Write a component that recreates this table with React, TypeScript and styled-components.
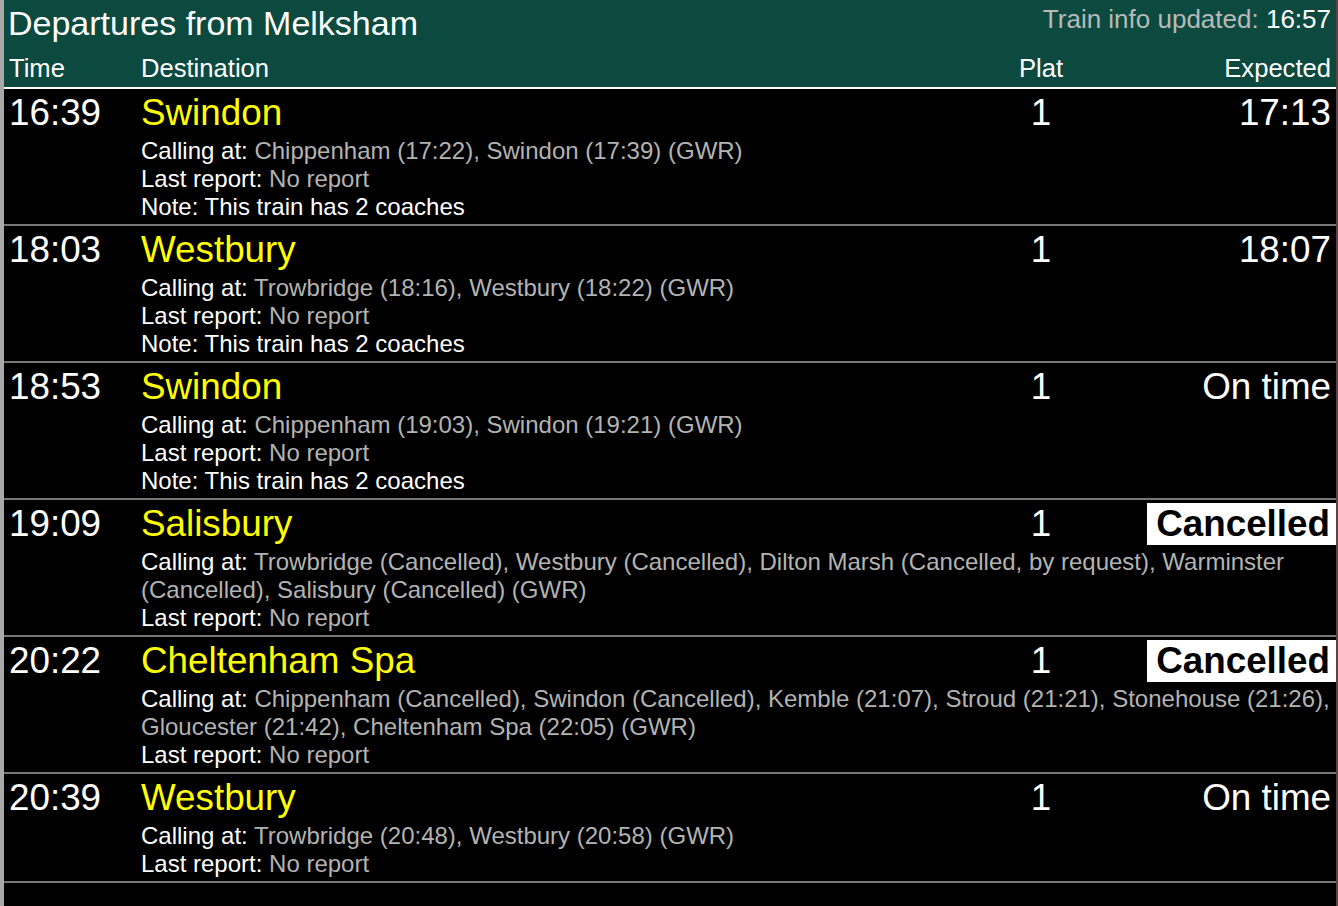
import React from 'react';
import styled, { createGlobalStyle } from 'styled-components';

const GlobalStyle = createGlobalStyle`
  html, body {
    margin: 0;
    padding: 0;
    height: 100%;
  }
  body {
    font-family: "Liberation Sans", Arial, Helvetica, sans-serif;
    background: linear-gradient(
      to right,
      #a9a9a9 0 4px,
      #000 4px 1336px,
      #5c4242 1336px
    );
    overflow: hidden;
  }
`;

const Board = styled.div`
  margin-left: 4px;
  width: 1332px;
  min-height: 906px;
  background: #000;
  color: #fff;
`;

const Header = styled.header`
  background: #0c4a3f;
  padding: 3px 5px 4px 0;
  border-bottom: 2px solid #fff;
`;

const TitleRow = styled.div`
  display: flex;
  justify-content: space-between;
  align-items: flex-start;
  padding-left: 4px;
`;

const Title = styled.h1`
  margin: 0;
  font-size: 34px;
  line-height: 40px;
  font-weight: normal;
`;

const Updated = styled.div`
  font-size: 26px;
  line-height: 32px;
  color: #b9b9b9;

  & > b {
    color: #fff;
    font-weight: normal;
  }
`;

const Columns = styled.div`
  display: grid;
  grid-template-columns: 137px 1fr 90px 245px;
  margin-top: 10px;
  font-size: 25.6px;
  line-height: 30px;
`;

const ColLabel = styled.div<{ $align?: 'left' | 'center' | 'right'; $indent?: number }>`
  text-align: ${p => p.$align || 'left'};
  padding-left: ${p => p.$indent || 0}px;
`;

const Row = styled.div`
  display: grid;
  grid-template-columns: 137px 1fr 90px 250px;
  padding: 3px 0 3px;
  border-bottom: 2px solid #777;
`;

const BigCell = styled.div<{ $align?: 'left' | 'center' | 'right'; $color?: string }>`
  font-size: 36.8px;
  line-height: 42px;
  text-align: ${p => p.$align || 'left'};
  color: ${p => p.$color || '#fff'};
  white-space: nowrap;
`;

const TimeCell = styled(BigCell)`
  padding-left: 5px;
`;

const ExpectedValue = styled.span<{ $cancelled?: boolean }>`
  display: inline-block;
  padding: ${p => (p.$cancelled ? '0 6px 0 9px' : '0 5px')};
  background: ${p => (p.$cancelled ? '#fff' : 'transparent')};
  color: ${p => (p.$cancelled ? '#000' : '#fff')};
  font-weight: ${p => (p.$cancelled ? 'bold' : 'normal')};
`;

const Details = styled.div`
  grid-column: 2 / -1;
  margin-top: 3px;
  padding-right: 3px;
  font-size: 24px;
  line-height: 28px;
`;

const Line = styled.div`
  color: #fff;
  & > span {
    color: #b3b3b3;
  }
`;

interface Departure {
  time: string;
  destination: string;
  plat: string;
  expected: string;
  cancelled?: boolean;
  calling: string;
  note?: string;
}

const departures: Departure[] = [
  {
    time: '16:39',
    destination: 'Swindon',
    plat: '1',
    expected: '17:13',
    calling: 'Chippenham (17:22), Swindon (17:39) (GWR)',
    note: 'This train has 2 coaches',
  },
  {
    time: '18:03',
    destination: 'Westbury',
    plat: '1',
    expected: '18:07',
    calling: 'Trowbridge (18:16), Westbury (18:22) (GWR)',
    note: 'This train has 2 coaches',
  },
  {
    time: '18:53',
    destination: 'Swindon',
    plat: '1',
    expected: 'On time',
    calling: 'Chippenham (19:03), Swindon (19:21) (GWR)',
    note: 'This train has 2 coaches',
  },
  {
    time: '19:09',
    destination: 'Salisbury',
    plat: '1',
    expected: 'Cancelled',
    cancelled: true,
    calling:
      'Trowbridge (Cancelled), Westbury (Cancelled), Dilton Marsh (Cancelled, by request), Warminster (Cancelled), Salisbury (Cancelled) (GWR)',
  },
  {
    time: '20:22',
    destination: 'Cheltenham Spa',
    plat: '1',
    expected: 'Cancelled',
    cancelled: true,
    calling:
      'Chippenham (Cancelled), Swindon (Cancelled), Kemble (21:07), Stroud (21:21), Stonehouse (21:26), Gloucester (21:42), Cheltenham Spa (22:05) (GWR)',
  },
  {
    time: '20:39',
    destination: 'Westbury',
    plat: '1',
    expected: 'On time',
    calling: 'Trowbridge (20:48), Westbury (20:58) (GWR)',
  },
];

const App: React.FC = () => {
  return (
    <React.Fragment>
      <GlobalStyle />
      <Board>
        <Header>
          <TitleRow>
            <Title>Departures from Melksham</Title>
            <Updated>
              Train info updated: <b>16:57</b>
            </Updated>
          </TitleRow>
          <Columns>
            <ColLabel $indent={5}>Time</ColLabel>
            <ColLabel>Destination</ColLabel>
            <ColLabel $align="center">Plat</ColLabel>
            <ColLabel $align="right">Expected</ColLabel>
          </Columns>
        </Header>
        {departures.map(d => (
          <Row key={d.time}>
            <TimeCell>{d.time}</TimeCell>
            <BigCell $color="#ffff00">{d.destination}</BigCell>
            <BigCell $align="center">{d.plat}</BigCell>
            <BigCell $align="right">
              <ExpectedValue $cancelled={d.cancelled}>{d.expected}</ExpectedValue>
            </BigCell>
            <Details>
              <Line>
                Calling at: <span>{d.calling}</span>
              </Line>
              <Line>
                Last report: <span>No report</span>
              </Line>
              {d.note && <Line>Note: {d.note}</Line>}
            </Details>
          </Row>
        ))}
      </Board>
    </React.Fragment>
  );
};

export default App;
